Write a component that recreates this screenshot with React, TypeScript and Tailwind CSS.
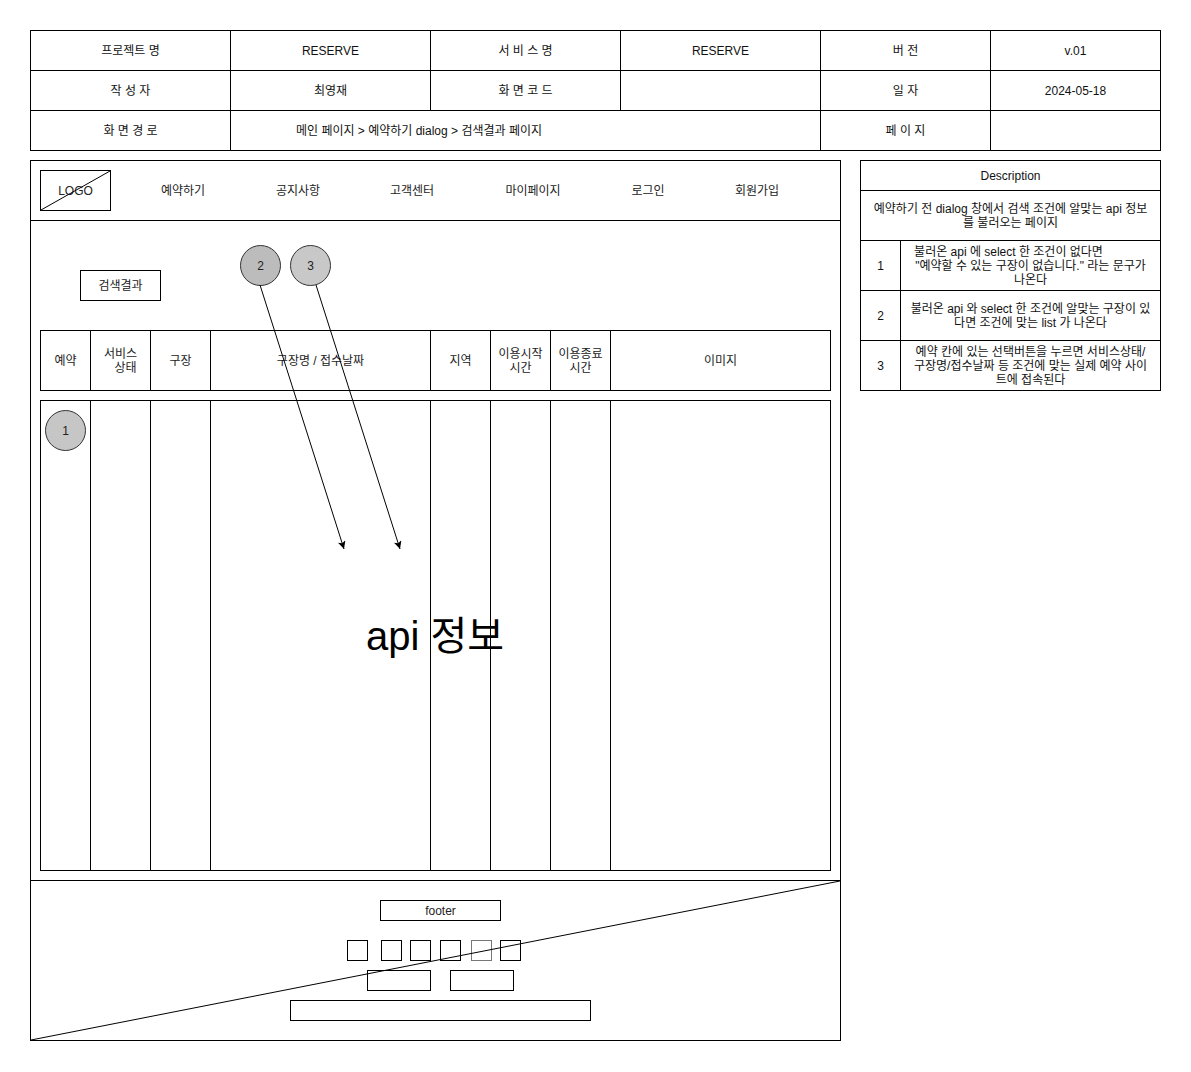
const font = "font-['Liberation_Sans','Noto_Sans_CJK_KR',sans-serif]";

const cell = "border border-black text-center align-middle";

function InfoTable() {
  return (
    <table className="w-[1130px] table-fixed text-[12px] text-[#111]">
      <colgroup>
        <col className="w-[200px]" />
        <col className="w-[200px]" />
        <col className="w-[190px]" />
        <col className="w-[200px]" />
        <col className="w-[170px]" />
        <col className="w-[170px]" />
      </colgroup>
      <tbody>
        <tr className="h-[40px]">
          <td className={cell}>프로젝트 명</td>
          <td className={cell}>RESERVE</td>
          <td className={cell}>서 비 스 명</td>
          <td className={cell}>RESERVE</td>
          <td className={cell}>버 전</td>
          <td className={cell}>v.01</td>
        </tr>
        <tr className="h-[40px]">
          <td className={cell}>작 성 자</td>
          <td className={cell}>최영재</td>
          <td className={cell}>화 면 코 드</td>
          <td className={cell}></td>
          <td className={cell}>일 자</td>
          <td className={cell}>2024-05-18</td>
        </tr>
        <tr className="h-[40px]">
          <td className={cell}>화 면 경 로</td>
          <td className="border border-black align-middle" colSpan={3}>
            <div className="w-[376px] text-center">메인 페이지 &gt; 예약하기 dialog &gt; 검색결과 페이지</div>
          </td>
          <td className={cell}>페 이 지</td>
          <td className={cell}></td>
        </tr>
      </tbody>
    </table>
  );
}

function Cols() {
  return (
    <colgroup>
      <col className="w-[50px]" />
      <col className="w-[60px]" />
      <col className="w-[60px]" />
      <col className="w-[220px]" />
      <col className="w-[60px]" />
      <col className="w-[60px]" />
      <col className="w-[60px]" />
      <col className="w-[220px]" />
    </colgroup>
  );
}

function Circle({ n, tone }: { n: string; tone: string }) {
  return (
    <div className={`flex h-[41px] w-[41px] items-center justify-center rounded-full border border-[#333] text-[12px] text-[#222] ${tone}`}>
      {n}
    </div>
  );
}

function Nav() {
  const items = [
    ["예약하기", "ml-[22px]"],
    ["공지사항", "ml-[15px]"],
    ["고객센터", "ml-[14px]"],
    ["마이페이지", "ml-[21px]"],
    ["로그인", "ml-[15px]"],
    ["회원가입", "ml-[9px]"],
  ];
  return (
    <div className="flex h-[60px] shrink-0 items-center border-b border-black text-[12px] text-[#222]">
      <div className="relative ml-[9px] flex h-[41px] w-[71px] items-center justify-center border border-black">
        LOGO
        <svg className="absolute inset-0 h-full w-full" viewBox="0 0 69 39" preserveAspectRatio="none">
          <line x1="0" y1="39" x2="69" y2="0" stroke="black" strokeWidth="1" />
        </svg>
      </div>
      {items.map(([t, m]) => (
        <span key={t} className={`${m} w-[100px] text-center`}>
          {t}
        </span>
      ))}
    </div>
  );
}

function Footer() {
  const sq = "h-[21px] w-[21px] border";
  return (
    <div className="relative mt-auto h-[160px] shrink-0 border-t border-black">
      <div className="flex flex-col items-start text-[12px] text-[#222]">
        <div className="ml-[349px] mt-[19px] flex h-[21px] w-[121px] items-center justify-center border border-black">footer</div>
        <div className="ml-[316px] mt-[19px] flex">
          <div className={`${sq} border-black`} />
          <div className={`${sq} ml-[13px] border-black`} />
          <div className={`${sq} ml-[8px] border-black`} />
          <div className={`${sq} ml-[9px] border-black`} />
          <div className={`${sq} ml-[10px] border-[#777]`} />
          <div className={`${sq} ml-[8px] border-black`} />
        </div>
        <div className="ml-[336px] mt-[9px] flex">
          <div className="h-[21px] w-[64px] border border-black" />
          <div className="ml-[19px] h-[21px] w-[64px] border border-black" />
        </div>
        <div className="ml-[259px] mt-[9px] h-[21px] w-[301px] border border-black" />
      </div>
      <svg className="pointer-events-none absolute inset-0 h-full w-full" viewBox="0 0 809 159" preserveAspectRatio="none">
        <line x1="0" y1="159" x2="809" y2="0" stroke="black" strokeWidth="1" />
      </svg>
    </div>
  );
}

function Screen() {
  const th = "border border-black text-center align-middle leading-[14px]";
  return (
    <div className="relative flex h-[881px] w-[811px] shrink-0 flex-col border border-black">
      <Nav />
      <div className="ml-[49px] mt-[49px] flex h-[31px] w-[81px] items-center justify-center border border-black text-[12px] text-[#222]">
        검색결과
      </div>
      <table className="ml-[9px] mt-[29px] w-[790px] table-fixed text-[12px] text-[#222]">
        <Cols />
        <tbody>
          <tr className="h-[60px]">
            <td className={th}>예약</td>
            <td className={th}>
              서비스
              <br />
              <span className="pl-[10px]">상태</span>
            </td>
            <td className={th}>구장</td>
            <td className={th}>구장명 / 접수날짜</td>
            <td className={th}>지역</td>
            <td className={th}>
              이용시작
              <br />
              시간
            </td>
            <td className={th}>
              이용종료
              <br />
              시간
            </td>
            <td className={th}>이미지</td>
          </tr>
        </tbody>
      </table>
      <div className="relative ml-[9px] mt-[9px] w-[790px]">
        <table className="w-[790px] table-fixed">
          <Cols />
          <tbody>
            <tr className="h-[470px]">
              <td className="border border-black align-top">
                <div className="ml-[4px] mt-[9px]">
                  <Circle n="1" tone="bg-[#c6c6c6]" />
                </div>
              </td>
              <td className="border border-black" />
              <td className="border border-black" />
              <td className="border border-black" />
              <td className="border border-black" />
              <td className="border border-black" />
              <td className="border border-black" />
              <td className="border border-black" />
            </tr>
          </tbody>
        </table>
        <div className="pointer-events-none absolute inset-0 flex items-center justify-center text-[40px] text-black">
          api 정보
        </div>
      </div>
      <Footer />

      <div className="absolute left-[209px] top-[84px]">
        <Circle n="2" tone="bg-[#bcbcbc]" />
      </div>
      <div className="absolute left-[259px] top-[84px]">
        <Circle n="3" tone="bg-[#c8c8c8]" />
      </div>
      <svg className="pointer-events-none absolute left-0 top-0 h-[879px] w-[809px]" viewBox="0 0 809 879">
        <defs>
          <marker id="ah" markerWidth="9" markerHeight="8" refX="8" refY="4" orient="auto" markerUnits="userSpaceOnUse">
            <path d="M0,0 L8,4 L0,8 L2,4 z" fill="black" />
          </marker>
        </defs>
        <line x1="229" y1="124" x2="313" y2="388" stroke="black" strokeWidth="1" markerEnd="url(#ah)" />
        <line x1="285" y1="124" x2="369" y2="388" stroke="black" strokeWidth="1" markerEnd="url(#ah)" />
      </svg>
    </div>
  );
}

function Description() {
  const d = "border border-black text-center align-middle";
  return (
    <table className="w-[300px] table-fixed self-start text-[12px] leading-[14px] text-[#111]">
      <colgroup>
        <col className="w-[40px]" />
        <col className="w-[260px]" />
      </colgroup>
      <tbody>
        <tr className="h-[30px]">
          <td className={d} colSpan={2}>Description</td>
        </tr>
        <tr className="h-[50px]">
          <td className={`${d} whitespace-nowrap`} colSpan={2}>
            예약하기 전 dialog 창에서 검색 조건에 알맞는 api 정보
            <br />를 불러오는 페이지
          </td>
        </tr>
        <tr className="h-[50px]">
          <td className={d}>1</td>
          <td className={`${d} whitespace-nowrap`}>
            <span className="pr-[44px]">불러온 api 에 select 한 조건이 없다면</span>
            <br />
            "예약할 수 있는 구장이 없습니다." 라는 문구가
            <br />
            나온다
          </td>
        </tr>
        <tr className="h-[50px]">
          <td className={d}>2</td>
          <td className={`${d} whitespace-nowrap`}>
            불러온 api 와 select 한 조건에 알맞는 구장이 있
            <br />
            다면 조건에 맞는 list 가 나온다
          </td>
        </tr>
        <tr className="h-[50px]">
          <td className={d}>3</td>
          <td className={`${d} whitespace-nowrap`}>
            예약 칸에 있는 선택버튼을 누르면 서비스상태/
            <br />
            구장명/접수날짜 등 조건에 맞는 실제 예약 사이
            <br />
            트에 접속된다
          </td>
        </tr>
      </tbody>
    </table>
  );
}

export default function App() {
  return (
    <div className={`${font} min-h-[1072px] w-[1191px] bg-white pl-[30px] pt-[30px]`}>
      <InfoTable />
      <div className="mt-[9px] flex gap-[19px]">
        <Screen />
        <Description />
      </div>
    </div>
  );
}
